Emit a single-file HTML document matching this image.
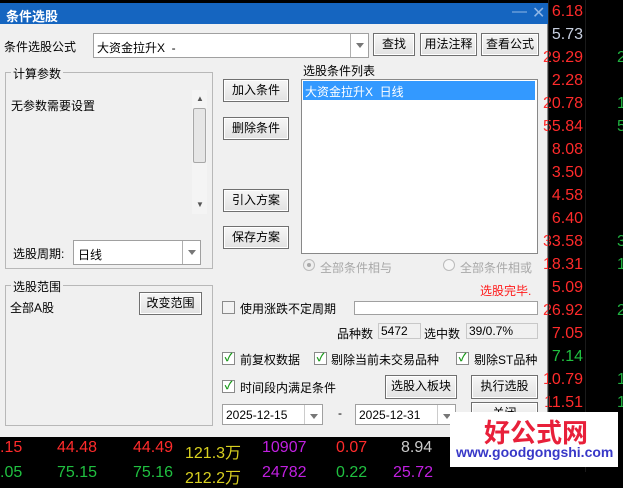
<!DOCTYPE html>
<html><head><meta charset="utf-8"><style>
*{margin:0;padding:0;box-sizing:border-box}
body{width:623px;height:472px;background:#000;position:relative;overflow:hidden;font-family:"Liberation Sans","Noto Sans CJK SC",sans-serif;font-size:12px;color:#000}
.a{position:absolute;white-space:nowrap}
.dlg{position:absolute;left:0;top:3px;width:548px;height:434px;background:#f0f0f0;border-right:1px solid #888}
.title{position:absolute;left:0;top:3px;width:548px;height:21px;background:#1565c0}
.btn{position:absolute;background:linear-gradient(#f6f6f6,#e2e2e2);border:1px solid #707070;box-shadow:inset 0 0 0 1px #fff;text-align:center;line-height:20px}
.box{position:absolute;background:#fff;border:1px solid #a0a0a0}
.grp{position:absolute;border:1px solid #b8b8b8}
.dd{position:absolute;top:0;right:0;width:18px;height:100%;border-left:1px solid #b0b0b0}
.dd:after{content:"";position:absolute;left:5px;top:9px;border:4px solid transparent;border-top:5px solid #777}
.cb{position:absolute;width:13px;height:13px;border:1px solid #8a8a8a;background:#fff;font-size:11px;line-height:11px;text-align:center;color:#1a9a1a;font-weight:bold}
.n{position:absolute;font-size:16px;color:#ff2b2b;text-align:right;width:70px;white-space:nowrap}
</style></head><body>
<div class="dlg"></div>
<div class="title"></div>
<div class="a" style="left:6px;top:6px;color:#fff;font-weight:bold;font-size:13px">条件选股</div>
<div class="a" style="left:512px;top:3px;color:#8fb6e6;font-size:15px">—</div>
<div class="a" style="left:532px;top:3px;color:#8fb6e6;font-size:16px">✕</div>

<div class="a" style="left:4px;top:38px">条件选股公式</div>
<div class="box" style="left:93px;top:33px;width:276px;height:25px"><span class="a" style="left:3px;top:5px">大资金拉升X&nbsp;&nbsp;-</span><div class="dd"></div></div>
<div class="btn" style="left:373px;top:33px;width:42px;height:23px">查找</div>
<div class="btn" style="left:420px;top:33px;width:57px;height:23px">用法注释</div>
<div class="btn" style="left:481px;top:33px;width:58px;height:23px">查看公式</div>

<div class="grp" style="left:5px;top:72px;width:208px;height:197px"></div>
<div class="a" style="left:11px;top:65px;background:#f0f0f0;padding:0 2px">计算参数</div>
<div class="a" style="left:11px;top:97px">无参数需要设置</div>
<div class="a" style="left:192px;top:90px;width:15px;height:124px;background:#f4f4f4"></div>
<div class="a" style="left:193px;top:108px;width:13px;height:55px;background:#e6e6e6;border:1px solid #a8a8a8;border-radius:2px"></div>
<div class="a" style="left:196px;top:94px;font-size:8px;color:#555">▲</div>
<div class="a" style="left:196px;top:200px;font-size:8px;color:#555">▼</div>
<div class="a" style="left:13px;top:245px">选股周期:</div>
<div class="box" style="left:73px;top:240px;width:128px;height:25px"><span class="a" style="left:4px;top:5px">日线</span><div class="dd"></div></div>

<div class="grp" style="left:5px;top:285px;width:208px;height:141px"></div>
<div class="a" style="left:11px;top:278px;background:#f0f0f0;padding:0 2px">选股范围</div>
<div class="a" style="left:10px;top:299px">全部A股</div>
<div class="btn" style="left:139px;top:292px;width:63px;height:23px">改变范围</div>

<div class="btn" style="left:223px;top:79px;width:66px;height:23px">加入条件</div>
<div class="btn" style="left:223px;top:117px;width:66px;height:23px">删除条件</div>
<div class="btn" style="left:223px;top:189px;width:66px;height:23px">引入方案</div>
<div class="btn" style="left:223px;top:226px;width:66px;height:23px">保存方案</div>

<div class="a" style="left:303px;top:62px">选股条件列表</div>
<div class="box" style="left:301px;top:79px;width:237px;height:175px;border-color:#888"></div>
<div class="a" style="left:303px;top:81px;width:232px;height:19px;background:#3399ff;color:#fff;padding:2px 0 0 2px">大资金拉升X&nbsp;&nbsp;日线</div>

<div class="a" style="left:303px;top:259px;width:12px;height:12px;border-radius:50%;border:1px solid #bbb;background:#eee"><div style="margin:3px;width:4px;height:4px;border-radius:50%;background:#aaa"></div></div>
<div class="a" style="left:320px;top:259px;color:#a8a8a8">全部条件相与</div>
<div class="a" style="left:443px;top:259px;width:12px;height:12px;border-radius:50%;border:1px solid #bbb;background:#f6f6f6"></div>
<div class="a" style="left:460px;top:259px;color:#a8a8a8">全部条件相或</div>
<div class="a" style="left:480px;top:282px;color:#ff1a1a">选股完毕.</div>

<div class="cb" style="left:222px;top:301px;background:#f2f2f2"></div>
<div class="a" style="left:240px;top:300px">使用涨跌不定周期</div>
<div class="box" style="left:354px;top:301px;width:184px;height:14px"></div>
<div class="a" style="left:337px;top:325px">品种数</div>
<div class="a" style="left:378px;top:323px;width:43px;height:16px;border:1px solid #c8c8c8;padding-left:2px;line-height:14px">5472</div>
<div class="a" style="left:424px;top:325px">选中数</div>
<div class="a" style="left:466px;top:323px;width:72px;height:16px;border:1px solid #c8c8c8;padding-left:2px;line-height:14px">39/0.7%</div>

<div class="cb" style="left:222px;top:352px">✓</div><div class="a" style="left:240px;top:351px">前复权数据</div>
<div class="cb" style="left:314px;top:352px">✓</div><div class="a" style="left:331px;top:351px">剔除当前未交易品种</div>
<div class="cb" style="left:456px;top:352px">✓</div><div class="a" style="left:474px;top:351px">剔除ST品种</div>
<div class="cb" style="left:222px;top:380px">✓</div><div class="a" style="left:240px;top:379px">时间段内满足条件</div>
<div class="btn" style="left:385px;top:375px;width:72px;height:24px">选股入板块</div>
<div class="btn" style="left:471px;top:375px;width:67px;height:24px">执行选股</div>
<div class="box" style="left:222px;top:404px;width:101px;height:21px"><span class="a" style="left:3px;top:3px">2025-12-15</span><div class="dd" style="border-left-color:#ccc"></div></div>
<div class="a" style="left:338px;top:406px">-</div>
<div class="box" style="left:355px;top:404px;width:101px;height:21px"><span class="a" style="left:3px;top:3px">2025-12-31</span><div class="dd" style="border-left-color:#ccc"></div></div>
<div class="btn" style="left:471px;top:402px;width:67px;height:24px">关闭</div>

<div class="n" style="left:513px;top:3px">6.18</div>
<div class="n" style="left:513px;top:26px;color:#c8d0e0">5.73</div>
<div class="n" style="left:513px;top:49px">29.29</div>
<div class="n" style="left:513px;top:72px">2.28</div>
<div class="n" style="left:513px;top:95px">20.78</div>
<div class="n" style="left:513px;top:118px">55.84</div>
<div class="n" style="left:513px;top:141px">8.08</div>
<div class="n" style="left:513px;top:164px">3.50</div>
<div class="n" style="left:513px;top:187px">4.58</div>
<div class="n" style="left:513px;top:210px">6.40</div>
<div class="n" style="left:513px;top:233px">33.58</div>
<div class="n" style="left:513px;top:256px">18.31</div>
<div class="n" style="left:513px;top:279px">5.09</div>
<div class="n" style="left:513px;top:302px">26.92</div>
<div class="n" style="left:513px;top:325px">7.05</div>
<div class="n" style="left:513px;top:348px;color:#20c040">7.14</div>
<div class="n" style="left:513px;top:371px">10.79</div>
<div class="n" style="left:513px;top:394px">11.51</div>
<div class="a" style="left:548px;top:0;width:1px;height:437px;background:#222"></div>
<div class="a" style="left:585px;top:0;width:1px;height:472px;background:#1a1a1a"></div>
<div class="a" style="left:617px;top:49px;color:#20b040;font-size:16px">2</div>
<div class="a" style="left:617px;top:95px;color:#20b040;font-size:16px">1</div>
<div class="a" style="left:617px;top:118px;color:#20b040;font-size:16px">5</div>
<div class="a" style="left:617px;top:233px;color:#20b040;font-size:16px">3</div>
<div class="a" style="left:617px;top:256px;color:#20b040;font-size:16px">1</div>
<div class="a" style="left:617px;top:302px;color:#20b040;font-size:16px">2</div>
<div class="a" style="left:617px;top:371px;color:#20b040;font-size:16px">1</div>
<div class="a" style="left:617px;top:394px;color:#20b040;font-size:16px">1</div>

<div class="a" style="left:0;top:439px;font-size:16px;color:#ff2b2b">.15</div>
<div class="a" style="left:57px;top:439px;font-size:16px;color:#ff2b2b">44.48</div>
<div class="a" style="left:133px;top:439px;font-size:16px;color:#ff2b2b">44.49</div>
<div class="a" style="left:185px;top:439px;font-size:16px;color:#d8d020">121.3万</div>
<div class="a" style="left:262px;top:439px;font-size:16px;color:#c020e0">10907</div>
<div class="a" style="left:336px;top:439px;font-size:16px;color:#ff2b2b">0.07</div>
<div class="a" style="left:401px;top:439px;font-size:16px;color:#ccc">8.94</div>
<div class="a" style="left:0;top:464px;font-size:16px;color:#20c040">.05</div>
<div class="a" style="left:57px;top:464px;font-size:16px;color:#20c040">75.15</div>
<div class="a" style="left:133px;top:464px;font-size:16px;color:#20c040">75.16</div>
<div class="a" style="left:185px;top:464px;font-size:16px;color:#d8d020">212.2万</div>
<div class="a" style="left:262px;top:464px;font-size:16px;color:#c020e0">24782</div>
<div class="a" style="left:336px;top:464px;font-size:16px;color:#20c040">0.22</div>
<div class="a" style="left:393px;top:464px;font-size:16px;color:#c020e0">25.72</div>

<div class="a" style="left:450px;top:412px;width:168px;height:55px;background:#fff"></div>
<div class="a" style="left:484px;top:413px;font-size:26px;font-weight:bold;color:#e8203a">好公式网</div>
<div class="a" style="left:456px;top:444px;font-size:14px;font-weight:bold;color:#3838c8">www.goodgongshi.com</div>
</body></html>
